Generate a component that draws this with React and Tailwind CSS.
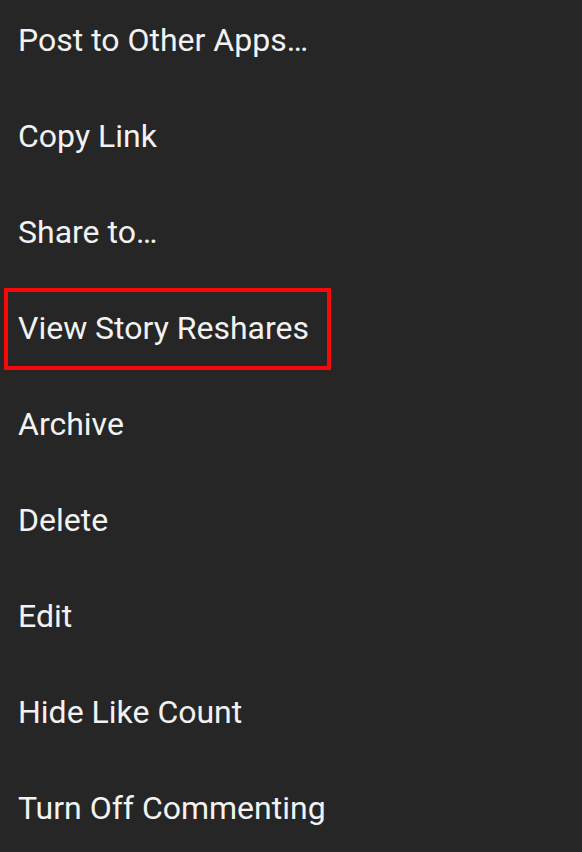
import React from 'react'

const items = [
  "Post to Other Apps…",
  "Copy Link",
  "Share to…",
  "View Story Reshares",
  "Archive",
  "Delete",
  "Edit",
  "Hide Like Count",
  "Turn Off Commenting",
]

const App = () => {
  return (
    <div className="w-[582px] h-[852px] overflow-hidden bg-[#262626]" style={{ fontFamily: "Roboto, sans-serif" }}>
      <div className="flex flex-col -mt-2">
        {items.map((label, i) =>
          label === "View Story Reshares" ? (
            <div key={i} className="h-24 flex items-center">
              <div className="ml-[4px] mt-[2px] h-[82px] w-[327px] border-4 border-[#f80808] flex items-center pl-[10px] pb-[2px]">
                <span className="text-[32px] text-[#f2f2f2] leading-none">{label}</span>
              </div>
            </div>
          ) : (
            <div key={i} className="h-24 flex items-center pl-[18px]">
              <span className="text-[32px] text-[#f2f2f2] leading-none">{label}</span>
            </div>
          )
        )}
      </div>
    </div>
  )
}

export default App
